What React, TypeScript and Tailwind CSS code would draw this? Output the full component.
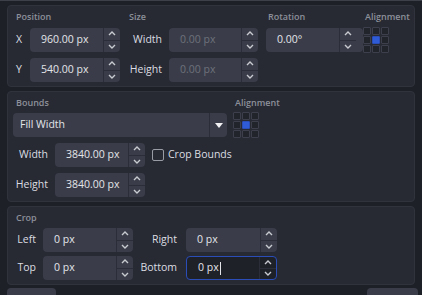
import React from 'react'
import clsx from 'clsx'

interface spinProps {
    value: string,
    disabled?: boolean,
    focused?: boolean,
    w?: string,
}

const Chevron = ({ up }: { up?: boolean }) => (
    <svg width="8" height="5" viewBox="0 0 8 5" className="block">
        <polyline
            points={up ? '1,4 4,1 7,4' : '1,1 4,4 7,1'}
            fill="none"
            stroke="#c9cbd1"
            strokeWidth="1.4"
        />
    </svg>
)

const SpinBox: React.FC<spinProps> = ({ value, disabled, focused, w }) => {
    return (
        <div
            className={clsx(
                'flex shrink-0 h-[24px] rounded-[4px] box-border',
                focused ? 'border border-[#2a4db8] bg-[#1f2129]' : 'bg-[#3a3d49]'
            )}
        >
            <div
                className={clsx(
                    'flex shrink-0 items-center whitespace-nowrap text-[10.5px] pl-[11px]',
                    w ? w : 'w-[73px]',
                    disabled ? 'text-[#6e717b]' : 'text-[#e4e5e9]'
                )}
            >
                {value}
                {focused ? <span className="ml-[1px] w-px h-[13px] bg-[#e4e5e9]" /> : null}
            </div>
            <div className="flex flex-col shrink-0 w-[17px] border-l border-[#2b2e38]">
                <div className="flex-1 flex items-center justify-center border-b border-[#2b2e38]">
                    <Chevron up />
                </div>
                <div className="flex-1 flex items-center justify-center">
                    <Chevron />
                </div>
            </div>
        </div>
    )
}

const AlignGrid = ({ cell }: { cell: string }) => (
    <div className="grid grid-cols-3 gap-px w-fit">
        {[0, 1, 2, 3, 4, 5, 6, 7, 8].map((i) => (
            <div
                key={i}
                className={clsx(
                    cell,
                    'rounded-[1px] border',
                    i == 4 ? 'border-[#2a4db8] bg-[#2f5bd6]' : 'border-[#3d404c] bg-[#22242c]'
                )}
            />
        ))}
    </div>
)

const Title = ({ text, className }: { text: string, className?: string }) => (
    <p className={clsx('h-[15px] leading-[15px] whitespace-nowrap text-[9px] font-semibold text-[#8d909a]', className)}>{text}</p>
)

const Label = ({ text, w }: { text: string, w: string }) => (
    <span className={clsx('shrink-0 whitespace-nowrap text-[10.5px] text-[#dcdde2] text-right', w)}>{text}</span>
)

const App: React.FC = () => {
    return (
        <div className="w-[422px] h-[295px] overflow-hidden bg-[#1e2027] font-['Open_Sans',sans-serif]">
            <div className="h-px bg-[#3d4049]" />
            <div className="px-[7px] pt-[4px] flex flex-col gap-[4px]">
                {/* transform */}
                <div className="border border-[#30333c] rounded-[4px] bg-[#272a33] flex pl-[8px] pt-[3px] pb-[4px]">
                    <div className="w-[113px] shrink-0 flex flex-col">
                        <Title text="Position" />
                        <div className="flex flex-col gap-[6px] mt-[4px]">
                            <div className="flex items-center">
                                <Label text="X" w="w-[14px] !text-left" />
                                <SpinBox value="960.00 px" />
                            </div>
                            <div className="flex items-center">
                                <Label text="Y" w="w-[14px] !text-left" />
                                <SpinBox value="540.00 px" />
                            </div>
                        </div>
                    </div>
                    <div className="w-[137px] shrink-0 flex flex-col">
                        <Title text="Size" />
                        <div className="flex flex-col gap-[6px] mt-[4px]">
                            <div className="flex items-center">
                                <Label text="Width" w="w-[40px] pr-[7px]" />
                                <SpinBox value="0.00 px" disabled w="w-[72px]" />
                            </div>
                            <div className="flex items-center">
                                <Label text="Height" w="w-[40px] pr-[7px]" />
                                <SpinBox value="0.00 px" disabled w="w-[72px]" />
                            </div>
                        </div>
                    </div>
                    <div className="w-[97px] shrink-0 flex flex-col">
                        <Title text="Rotation" className="pl-[2px]" />
                        <div className="mt-[4px]">
                            <SpinBox value="0.00°" w="w-[73px]" />
                        </div>
                    </div>
                    <div className="flex shrink-0 flex-col">
                        <Title text="Alignment" className="pl-[2px]" />
                        <div className="mt-[3px]">
                            <AlignGrid cell="w-[8px] h-[8px]" />
                        </div>
                    </div>
                </div>

                {/* bounds */}
                <div className="border border-[#30333c] rounded-[4px] bg-[#272a33] flex pl-[5px] pt-[3px] pb-[3px] h-[111px]">
                    <div className="w-[220px] shrink-0 flex flex-col">
                        <Title text="Bounds" className="pl-[3px]" />
                        <div className="mt-[3px] h-[24px] w-[214px] flex rounded-[4px] bg-[#3a3d49]">
                            <div className="flex-1 flex items-center pl-[7px] text-[10.5px] text-[#e4e5e9]">Fill Width</div>
                            <div className="w-[18px] border-l border-[#2b2e38] flex items-center justify-center">
                                <svg width="8" height="5" viewBox="0 0 8 5">
                                    <polygon points="0,0 8,0 4,5" fill="#f2f2f4" />
                                </svg>
                            </div>
                        </div>
                        <div className="flex flex-col gap-[6px] mt-[6px]">
                            <div className="flex items-center">
                                <Label text="Width" w="w-[42px] pr-[7px]" />
                                <SpinBox value="3840.00 px" />
                                <div className="ml-[7px] shrink-0 w-[12px] h-[12px] border border-[#9a9ca5] rounded-[2px]" />
                                <span className="ml-[4px] whitespace-nowrap text-[10.5px] text-[#dcdde2]">Crop Bounds</span>
                            </div>
                            <div className="flex items-center">
                                <Label text="Height" w="w-[42px] pr-[7px]" />
                                <SpinBox value="3840.00 px" />
                            </div>
                        </div>
                    </div>
                    <div className="flex shrink-0 flex-col">
                        <Title text="Alignment" className="pl-[2px]" />
                        <div className="mt-[2px]">
                            <AlignGrid cell="w-[8px] h-[8px]" />
                        </div>
                    </div>
                </div>

                {/* crop */}
                <div className="border border-[#30333c] rounded-[4px] bg-[#272a33] flex flex-col pl-[8px] pt-[3px] pb-[4px]">
                    <Title text="Crop" />
                    <div className="flex flex-col gap-[4px] mt-[3px]">
                        <div className="flex items-center">
                            <Label text="Left" w="w-[27px] pr-[7px]" />
                            <SpinBox value="0 px" />
                            <Label text="Right" w="w-[53px] pr-[9px]" />
                            <SpinBox value="0 px" w="w-[74px]" />
                        </div>
                        <div className="flex items-center">
                            <Label text="Top" w="w-[27px] pr-[7px]" />
                            <SpinBox value="0 px" />
                            <Label text="Bottom" w="w-[53px] pr-[9px]" />
                            <SpinBox value="0 px" focused w="w-[72px]" />
                        </div>
                    </div>
                </div>

                <div className="flex justify-between mt-[-1px]">
                    <div className="w-[49px] h-[10px] rounded-t-[4px] bg-[#3a3d49]" />
                    <div className="w-[51px] h-[10px] rounded-t-[4px] bg-[#3a3d49] mr-[-3px]" />
                </div>
            </div>
        </div>
    )
}

export default App
